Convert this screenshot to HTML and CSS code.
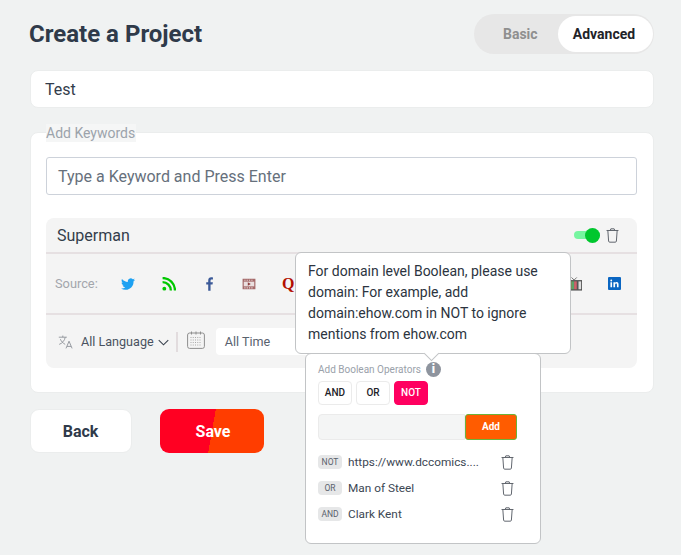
FILE: index.html
```html
<!DOCTYPE html>
<html lang="en">
<head>
<meta charset="utf-8">
<title>Create a Project</title>
<link rel="stylesheet" href="styles.css">
</head>
<body>
<svg class="sprite" width="0" height="0" aria-hidden="true">
  <symbol id="trash" viewBox="0 0 14 16">
    <path d="M.6 2.6h12.8M4.6 2.400 5.200.8h3.600l.6 1.600M2 2.800l.8 11.200c0 .7.5 1.200 1.200 1.200h6c.7 0 1.200-.5 1.200-1.200L12 2.800" fill="none" stroke="currentColor" stroke-width="1"/>
  </symbol>
</svg>
<main class="page">
  <header class="head">
    <h1 class="title">Create a Project</h1>
    <div class="mode">
      <span class="mode-off">Basic</span>
      <span class="mode-on">Advanced</span>
    </div>
  </header>

  <div class="name-field">Test</div>

  <section class="card">
    <span class="legend">Add Keywords</span>
    <div class="kw-input">Type a Keyword and Press Enter</div>

    <div class="kw">
      <div class="kw-top">
        <span class="kw-name">Superman</span>
        <span class="switch"><span class="switch-knob"></span></span>
        <svg class="trash trash-top"><use href="#trash"/></svg>
      </div>
      <div class="kw-sources">
        <span class="src-label">Source:</span>
        <svg class="src s-tw" viewBox="0 0 24 24"><path fill="#1da1f2" d="M23.900 4.600c-.9.4-1.800.7-2.800.8 1-.6 1.800-1.600 2.200-2.700-1 .6-2 1-3.100 1.200A4.900 4.900 0 0 0 11.800 8.400C7.700 8.200 4.100 6.300 1.700 3.300c-1.300 2.200-.7 5.100 1.500 6.600-.8 0-1.600-.2-2.200-.6 0 2.300 1.600 4.400 3.900 4.900-.7.200-1.500.2-2.200.1.600 2 2.400 3.400 4.600 3.400A9.900 9.900 0 0 1 0 19.700 14 14 0 0 0 21.500 7.300c1-.7 1.800-1.600 2.400-2.700z"/></svg>
        <svg class="src s-rss" viewBox="0 0 24 24"><circle cx="4" cy="20" r="3.300" fill="#00c800"/><path d="M1 8.800A14.200 14.200 0 0 1 15.200 23M1 1.800A21.200 21.200 0 0 1 22.200 23" fill="none" stroke="#00c800" stroke-width="4"/></svg>
        <svg class="src s-fb" viewBox="0 0 12 24"><path fill="#3b5998" d="M7.800 23.500V13h3.400l.6-4.100H7.800V6.300c0-1.200.4-2 2-2h2.100V.7C11.500.6 10.300.5 8.900.5 5.900.5 3.800 2.300 3.800 5.800v3.100H.4V13h3.400v10.500z"/></svg>
        <svg class="src s-vid" viewBox="0 0 24 20"><path fill="#a56a6a" d="M1 1h22v18H1z"/><path fill="#eadfdf" d="M3 6h18v8H3z"/><path fill="#8c3f3f" d="m10 7 5 3-5 3z"/><path fill="#e4d6d6" d="M4 2.500h2v2H4zm4 0h2v2H8zm4 0h2v2h-2zm4 0h2v2h-2zM4 15.500h2v2H4zm4 0h2v2H8zm4 0h2v2h-2zm4 0h2v2h-2z"/></svg>
        <span class="s-q">Q</span>
        <span class="src-fill"></span>
        <svg class="src s-tv" viewBox="0 0 16 16"><path d="M4 .5 7 3.500 10 .5" fill="none" stroke="#666" stroke-width="1"/><path fill="#555" d="M0 3.500h16v12H0z"/><path fill="#d9a441" d="M1 5h3v9H1z"/><path fill="#5aa469" d="M4 5h3v9H4z"/><path fill="#d0616b" d="M7 5h3v9H7z"/><path fill="#ddd" d="M12 5h3v9h-3z"/></svg>
        <svg class="src s-in" viewBox="0 0 24 24"><rect width="24" height="24" rx="2" fill="#0a66c2"/><path fill="#fff" d="M4.500 9.500h3V19h-3zM6 4.800a1.700 1.700 0 1 1 0 3.400 1.700 1.700 0 0 1 0-3.400zM10 9.500h2.900v1.300c.5-.9 1.600-1.500 2.900-1.500 3 0 3.700 2 3.700 4.500V19h-3v-4.900c0-1.200-.1-2.300-1.500-2.300s-1.900 1.100-1.900 2.300V19H10z"/></svg>
      </div>
      <div class="kw-filters">
        <svg class="lang" viewBox="0 0 20 18"><path d="M1 3h10M6 1v2M9 3c-.5 4-3.500 7.500-7.500 9M3 5.500c1 2.500 3 4.800 6 6.500M10 17l3.800-9 3.800 9M11.300 14.500h5" fill="none" stroke="#8b8f96" stroke-width="1.100"/></svg>
        <span class="lang-label">All Language</span>
        <svg class="caret" viewBox="0 0 12 7"><path d="M.8.8 6 6l5.200-5.200" fill="none" stroke="#3c4450" stroke-width="1.200"/></svg>
        <span class="vbar"></span>
        <svg class="cal" viewBox="0 0 18 18"><rect x=".6" y="2" width="16.800" height="15.400" rx="2" fill="none" stroke="#8e8e8e" stroke-width="1"/><path d="M4.500 .5v3M9 .5v3M13.500 .5v3" stroke="#8e8e8e" stroke-width="1"/><path d="M3.500 6.500h11M3.500 9h11M3.500 11.500h11M3.500 14h11" stroke="#a8a8a8" stroke-width="1" stroke-dasharray="1 1.250"/></svg>
        <span class="time">All Time</span>
      </div>
    </div>
  </section>

  <div class="actions">
    <button class="btn btn-back" type="button">Back</button>
    <button class="btn btn-save" type="button">Save</button>
  </div>
</main>

<aside class="tip">For domain level Boolean, please use domain: For example, add domain:ehow.com in NOT to ignore mentions from ehow.com</aside>

<aside class="bool">
  <div class="bool-head">
    <span class="bool-title">Add Boolean Operators</span>
    <span class="info">i</span>
  </div>
  <div class="ops">
    <span class="op">AND</span>
    <span class="op">OR</span>
    <span class="op op-not">NOT</span>
  </div>
  <div class="add-row">
    <span class="add-input"></span>
    <span class="add-btn">Add</span>
  </div>
  <ul class="terms">
    <li class="term"><span class="tag">NOT</span><span class="term-text">https://www.dccomics....</span><svg class="trash"><use href="#trash"/></svg></li>
    <li class="term"><span class="tag">OR</span><span class="term-text">Man of Steel</span><svg class="trash"><use href="#trash"/></svg></li>
    <li class="term"><span class="tag">AND</span><span class="term-text">Clark Kent</span><svg class="trash"><use href="#trash"/></svg></li>
  </ul>
</aside>
</body>
</html>
```
FILE: styles.css
```css
* { box-sizing: border-box; }
html, body { margin: 0; height: 555px; overflow: hidden; }
body { background: #f0f2f2; font-family: Roboto, "Liberation Sans", sans-serif; color: #2f3a4a; position: relative; }
.sprite { position: absolute; }
.page { padding: 14px 27px 0 30px; display: flex; flex-direction: column; }

.head { display: flex; justify-content: space-between; align-items: center; height: 40px; }
.title { margin: 0 0 0 -1px; font-size: 24px; font-weight: 700; color: #2f3a4a; }
.mode { width: 180px; height: 40px; border-radius: 20px; background: #e7e7e7; display: flex; align-items: center; justify-content: space-between; padding: 0 1px 0 29px; }
.mode-off { font-size: 14px; font-weight: 700; color: #8f8f8f; margin-bottom: 1px; }
.mode-on { width: 95px; height: 36px; border-radius: 18px; background: #fff; font-size: 14px; font-weight: 700; color: #1f2329; display: flex; align-items: center; justify-content: center; padding-right: 3px; }

.name-field { margin-top: 16px; height: 38px; background: #fff; border: 1px solid #ebeded; border-radius: 8px; padding: 1px 0 0 14px; font-size: 16px; line-height: 36px; color: #333d4b; }

.card { position: relative; margin-top: 24px; height: 261px; background: #fff; border: 1px solid #ebeded; border-radius: 8px; padding: 24px 15px 0; padding-right: 16px; }
.legend { position: absolute; left: 15px; top: -9px; background: #f5f6f6; font-size: 14px; line-height: 18px; color: #9ca3ab; padding-right: 1px; }
.kw-input { height: 38px; border: 1px solid #cdd2da; border-radius: 3px; padding: 1px 0 0 11px; font-size: 16px; line-height: 36px; color: #66707c; }

.kw { margin-top: 23px; height: 150px; background: #f4f4f4; border-radius: 8px; display: flex; flex-direction: column; }
.kw-top { height: 36px; border-bottom: 2px solid #e6e0e2; display: flex; align-items: center; padding: 0 18px 0 11px; }
.kw-name { font-size: 16px; color: #333d4b; flex: 1; }
.switch { width: 26px; height: 8px; border-radius: 4px; background: #76f5a0; position: relative; margin-right: 6px; }
.switch-knob { position: absolute; right: 0; top: -3.500px; width: 15px; height: 15px; border-radius: 50%; background: #00c72e; }
.trash { width: 13px; height: 15px; color: #555b63; flex: none; }
.kw-sources { height: 61px; border-bottom: 2px solid #e6e0e2; display: flex; align-items: center; padding: 0 16px 0 9px; }
.src-label { font-size: 12.800px; color: #a3a6ac; width: 64px; flex: none; }
.src { flex: none; }
.s-tw { width: 14px; height: 14px; margin-left: 2px; }
.s-rss { width: 14px; height: 14px; margin-left: 27px; }
.s-fb { width: 7px; height: 14px; margin-left: 30px; }
.s-vid { width: 14px; height: 12px; margin-left: 29px; }
.s-q { font-family: "Liberation Serif", serif; font-weight: 700; font-size: 16px; color: #b30f00; margin-left: 26px; }
.src-fill { flex: 1; }
.s-tv { width: 14px; height: 14px; margin-right: 26px; }
.s-in { width: 13px; height: 13px; }
.kw-filters { flex: 1; display: flex; align-items: center; padding: 0 0 0 12px; }
.lang { width: 16px; height: 16px; }
.lang-label { font-size: 12.600px; color: #495260; margin-left: 7px; }
.caret { width: 11px; height: 7px; margin: 2px 0 0 4px; }
.vbar { width: 2px; height: 20px; background: #e2dcde; margin-left: 7px; }
.cal { width: 18px; height: 18px; margin-left: 9px; margin-bottom: 3px; }
.time { width: 100px; height: 27px; background: #fff; border-radius: 4px; margin-left: 11px; padding-left: 9px; font-size: 12.600px; line-height: 27px; color: #59626e; }

.actions { margin-top: 16px; display: flex; gap: 28px; }
.btn { height: 44px; border-radius: 9px; font-family: inherit; font-size: 16px; font-weight: 700; padding: 0; }
.btn-back { width: 102px; background: #fff; border: 1px solid #ebeded; color: #2f3a4a; padding-right: 1px; }
.btn-save { width: 104px; border: 0; color: #fff; padding-left: 2px; background: linear-gradient(100deg, #ff0022 0 50%, #ff3d00 50% 100%); }

.tip { position: absolute; left: 295px; top: 252px; width: 276px; height: 102px; background: #fff; border: 1px solid #c2c4c6; border-radius: 6px; padding: 8px 12px; font-size: 14px; line-height: 21px; color: #2c3440; z-index: 2; }
.tip::after { content: ""; position: absolute; left: 130px; bottom: -6px; width: 10px; height: 10px; background: #fff; border-right: 1px solid #c2c4c6; border-bottom: 1px solid #c2c4c6; transform: rotate(45deg); }
.bool { position: absolute; left: 305px; top: 353px; width: 236px; height: 191px; background: #fff; border: 1px solid #c2c4c6; border-radius: 6px; padding: 7px 12px 0; z-index: 1; }
.bool-head { display: flex; align-items: center; height: 16px; }
.bool-title { font-size: 10px; color: #9aa1aa; }
.info { width: 15px; height: 15px; margin-left: 5px; border-radius: 50%; background: #8e949e; color: #fff; font-size: 12px; font-weight: 900; line-height: 15px; text-align: center; }
.ops { display: flex; gap: 4px; margin-top: 4px; }
.op { width: 34px; height: 24px; border: 1px solid #ebebeb; border-radius: 4px; background: #fff; color: #1e2228; font-size: 10px; font-weight: 500; line-height: 22px; text-align: center; }
.op-not { background: #ff0060; border-color: #ff0060; color: #fff; }
.add-row { display: flex; margin-top: 9px; height: 26px; width: 199px; }
.add-input { flex: 1; background: #f4f5f5; border: 1px solid #ebebeb; border-radius: 4px 0 0 4px; }
.add-btn { width: 52px; background: #ff5c00; border: 1px solid #6cb23a; border-radius: 3px; color: #fff; font-size: 10px; font-weight: 700; text-align: center; line-height: 24px; }
.terms { list-style: none; margin: 9px 0 0; padding: 0; }
.term { height: 26px; display: flex; align-items: center; position: relative; }
.tag { width: 24px; height: 14px; border-radius: 4px; background: #e6e7e8; color: #59616c; font-size: 8.500px; line-height: 14px; text-align: center; flex: none; }
.term-text { font-size: 11.800px; color: #3c4754; margin-left: 6px; flex: 1; }
.term .trash { margin-right: 14px; }
```
